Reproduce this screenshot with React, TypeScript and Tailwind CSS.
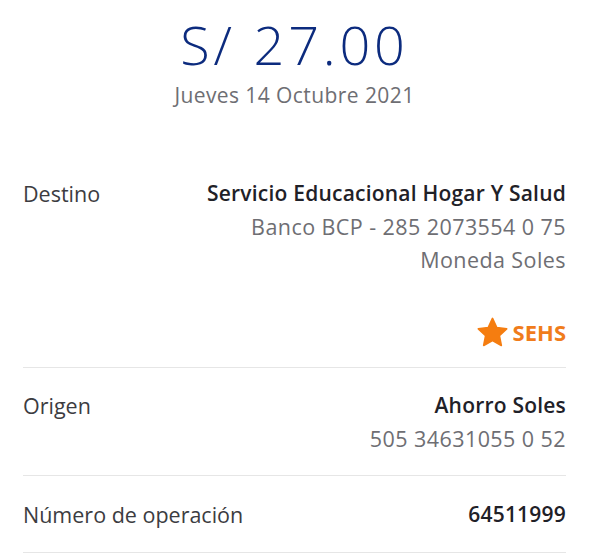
export default function App() {
  return (
    <div className="min-h-screen w-full bg-white font-['Open_Sans',sans-serif] text-[21.5px]">
      <div className="flex flex-col items-center pt-4">
        <h1 className="text-[54px] font-light leading-[56px] tracking-[0.07em] text-[#0c2b7e]">S/ 27.00</h1>
        <p className="mt-[9px] text-[21px] leading-[28px] tracking-[0.02em] text-[#6e6e73]">Jueves 14 Octubre 2021</p>
      </div>

      <div className="mt-[68px] px-[23px]">
        {/* Destino */}
        <div className="flex justify-between border-b border-[#e6e6e6] pb-[18px]">
          <span className="leading-[33px] text-[#3c3c41]">Destino</span>
          <div className="flex flex-col items-end">
            <span className="text-[21px] font-semibold leading-[33px] tracking-[0.01em] text-[#1f2128]">Servicio Educacional Hogar Y Salud</span>
            <span className="leading-[33px] tracking-[0.02em] text-[#6e6e73]">Banco BCP - 285 2073554 0 75</span>
            <span className="leading-[33px] tracking-[0.02em] text-[#6e6e73]">Moneda Soles</span>
            <span className="mt-10 flex items-center gap-[4px] text-[22px] font-bold leading-[33px] text-[#f07c1b]">
              <svg viewBox="0 0 24 24" className="h-[33px] w-[33px]" fill="#f57d10">
                <path d="M12 1.8l3.1 6.6 7.2.9-5.3 5 1.4 7.1L12 17.9l-6.4 3.5L7 14.3l-5.3-5 7.2-.9z" strokeLinejoin="round" stroke="#f57d10" strokeWidth="1.2" />
              </svg>
              SEHS
            </span>
          </div>
        </div>

        {/* Origen */}
        <div className="flex justify-between border-b border-[#e6e6e6] pb-[20px] pt-[21px]">
          <span className="leading-[33px] text-[#3c3c41]">Origen</span>
          <div className="flex flex-col items-end">
            <span className="text-[21px] font-semibold leading-[33px] tracking-[0.01em] text-[#1f2128]">Ahorro Soles</span>
            <span className="leading-[33px] tracking-[0.02em] text-[#6e6e73]">505 34631055 0 52</span>
          </div>
        </div>

        {/* Número de operación */}
        <div className="flex justify-between border-b border-[#e6e6e6] pb-[21px] pt-[22px]">
          <span className="leading-[33px] text-[#3c3c41]">Número de operación</span>
          <span className="text-[21px] font-semibold leading-[33px] tracking-[0.01em] text-[#1f2128]">64511999</span>
        </div>
      </div>
    </div>
  );
}
